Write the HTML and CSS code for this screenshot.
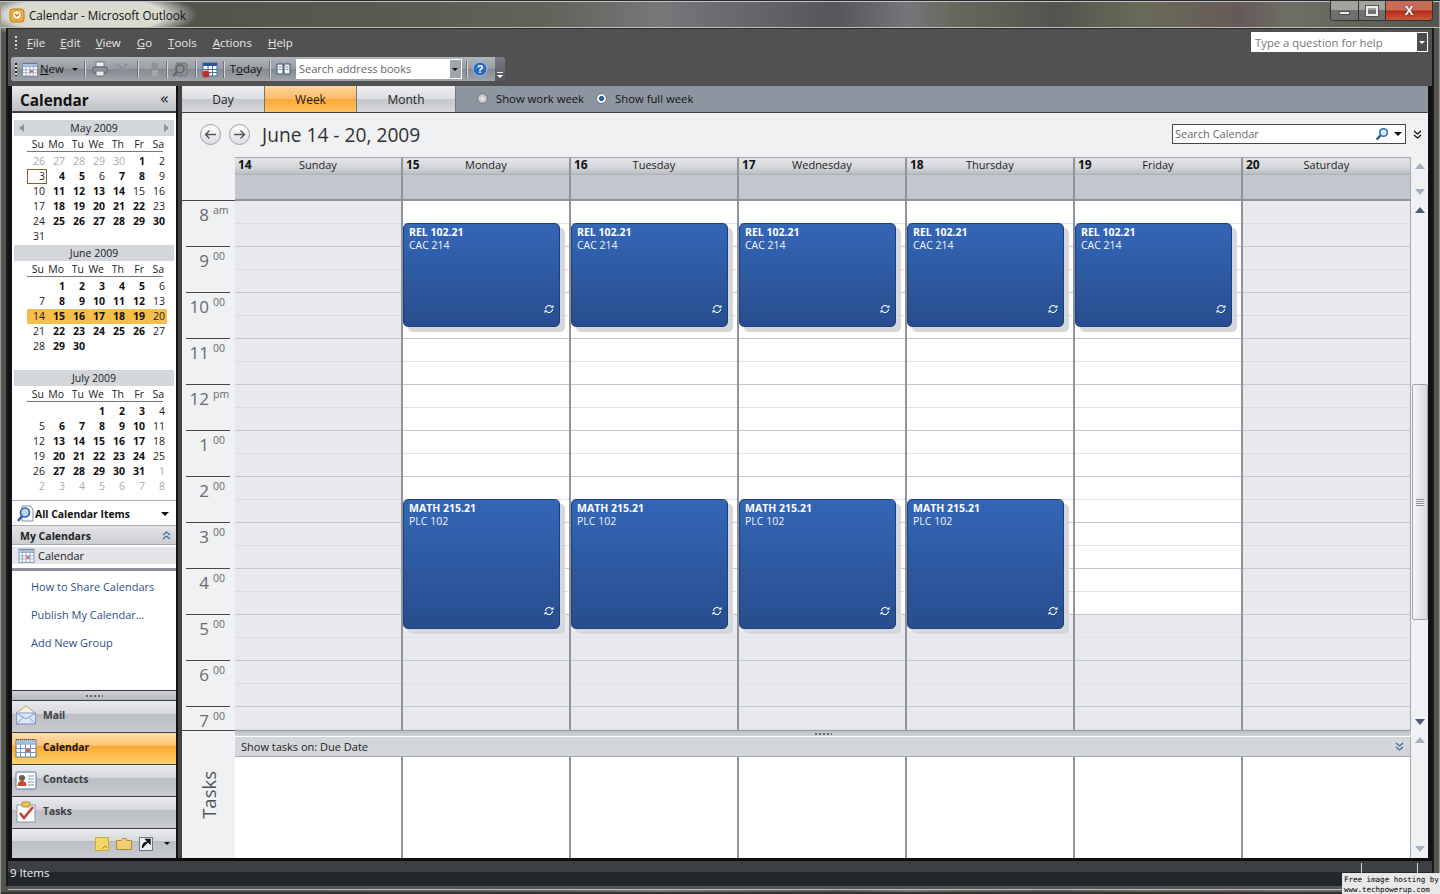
FILE: index.html
```html
<!DOCTYPE html>
<html lang="en">
<head>
<meta charset="utf-8">
<title>Calendar - Microsoft Outlook</title>
<link rel="stylesheet" href="styles.css">
</head>
<body>
<svg class="defs" width="0" height="0" aria-hidden="true">
  <symbol id="cal" viewBox="0 0 22 20">
    <rect x="1" y="2" width="20" height="17" fill="#fff" stroke="#5b78a8"/>
    <path d="M1 1.500h20" stroke="#444" stroke-dasharray="1 1"/>
    <rect x="1.500" y="2.500" width="19" height="3" fill="#a9bcd9"/>
    <path d="M1 6h20M1 10.500h20M1 14.500h20M5.500 6v13M10.500 6v13M15.500 6v13" stroke="#7d95bd" fill="none"/>
    <rect x="11" y="11" width="4" height="3" fill="#d8604a"/>
  </symbol>
  <symbol id="recur" viewBox="0 0 10 10">
    <path d="M1.500 5a3.500 3.500 0 0 1 6-2.400M8.500 5a3.500 3.500 0 0 1-6 2.400" fill="none" stroke="#fff" stroke-width="1.100"/>
    <path d="M9.500 .8v3H6.500zM.5 9.200v-3h3z" fill="#fff"/>
  </symbol>
  <symbol id="dbl" viewBox="0 0 9 9">
    <path d="M1 1l3.500 3L8 1M1 5l3.500 3L8 5" fill="none" stroke="currentColor" stroke-width="1.300"/>
  </symbol>
</svg>
<div class="window">
  <header class="titlebar">
    <svg class="app-icon" width="16" height="16" viewBox="0 0 16 16"><rect x="1" y="2" width="14" height="13" rx="3" fill="#f3b13c" stroke="#b9791b"/><circle cx="8" cy="8" r="4.500" fill="#fff6d8" stroke="#c98a22"/><path d="M6 7l2 2 2-2" fill="none" stroke="#b9791b" stroke-width="1.300"/></svg>
    <span class="app-title">Calendar - Microsoft Outlook</span>
    <div class="captions">
      <span class="cap cap-min"><i></i></span>
      <span class="cap cap-max"><i></i></span>
      <span class="cap cap-close">X</span>
    </div>
  </header>

  <div class="frame">
    <nav class="menubar">
      <span class="grip"></span>
      <span class="menu m1"><u>F</u>ile</span>
      <span class="menu m2"><u>E</u>dit</span>
      <span class="menu m3"><u>V</u>iew</span>
      <span class="menu m4"><u>G</u>o</span>
      <span class="menu m5"><u>T</u>ools</span>
      <span class="menu m6"><u>A</u>ctions</span>
      <span class="menu m7"><u>H</u>elp</span>
      <div class="helpbox"><span>Type a question for help</span><em></em></div>
    </nav>

    <div class="toolrow">
      <div class="toolbar">
        <span class="grip g2"></span>
        <svg class="ti t-new" width="16" height="15"><use href="#cal"/></svg>
        <span class="tool-text t-newtext"><u>N</u>ew</span>
        <span class="caret t-caret"></span>
        <span class="sep"></span>
        <svg class="ti" width="16" height="16" viewBox="0 0 16 16"><rect x="4" y="1" width="8" height="5" fill="#f0f0f0" stroke="#777"/><rect x="1" y="6" width="14" height="6" rx="1" fill="#8a94a3" stroke="#555d68"/><rect x="4" y="10" width="8" height="5" fill="#e8e8e8" stroke="#777"/></svg>
        <svg class="ti t-x" width="14" height="14" viewBox="0 0 14 14"><path d="M1.500 1.500l11 11M12.500 1.500l-11 11" stroke="#8c9198" stroke-width="2"/></svg>
        <span class="sep s2"></span>
        <svg class="ti" width="16" height="15" viewBox="0 0 16 15"><rect x="1" y="1" width="6" height="6" fill="#a4a8ad"/><rect x="9" y="1" width="6" height="6" fill="#8f9398"/><rect x="1" y="8" width="6" height="6" fill="#8f9398"/><rect x="9" y="8" width="6" height="6" fill="#a4a8ad"/></svg>
        <span class="sep s3"></span>
        <svg class="ti" width="17" height="17" viewBox="0 0 17 17"><rect x="4" y="2" width="11" height="13" rx="2" fill="#8c9096" stroke="#6d7177"/><circle cx="8" cy="8" r="4" fill="none" stroke="#5f6369" stroke-width="1.500"/><path d="M1 15l4-4" stroke="#5f6369" stroke-width="2"/></svg>
        <span class="sep s6"></span>
        <svg class="ti" width="17" height="17" viewBox="0 0 17 17"><rect x="2" y="2" width="14" height="13" fill="#fff" stroke="#4d6a9c"/><rect x="2" y="2" width="14" height="3" fill="#2f5597"/><path d="M2 8.500h14M2 11.500h14M7 5v10M11.500 5v10" stroke="#4d6a9c"/><circle cx="5" cy="13" r="3.500" fill="#c0322a"/></svg>
        <span class="sep s7"></span>
        <span class="tool-text t-today">T<u>o</u>day</span>
        <span class="sep s4"></span>
        <svg class="ti" width="15" height="14" viewBox="0 0 15 14"><path d="M1 2h6v10H1zM8 2h6v10H8z" fill="#f6f6f0" stroke="#37557f"/><path d="M2.500 5h3M2.500 7.500h3M9.500 5h3M9.500 7.500h3" stroke="#7d93b4"/></svg>
        <div class="addrbox"><span>Search address books</span><em></em></div>
        <span class="sep s5"></span>
        <svg class="ti" width="16" height="16" viewBox="0 0 16 16"><circle cx="8" cy="8" r="7" fill="#2d68c4" stroke="#a9c4ea"/><text class="help-q" x="8" y="12" text-anchor="middle">?</text></svg>
      </div>
      <div class="overflow"><i></i></div>
    </div>

    <div class="workspace">
      <aside class="sidebar">
        <div class="side-head"><strong>Calendar</strong><span>«</span></div>
        <div class="minis">
          <section class="mini">
            <div class="mini-head nav"><span class="tri-l"></span><span>May 2009</span><span class="tri-r"></span></div>
            <div class="dow"><span>Su</span><span>Mo</span><span>Tu</span><span>We</span><span>Th</span><span>Fr</span><span>Sa</span></div>
            <div class="dates">
              <i>26</i><i>27</i><i>28</i><i>29</i><i>30</i><b>1</b><span>2</span>
              <span class="today">3</span><b>4</b><b>5</b><span>6</span><b>7</b><b>8</b><span>9</span>
              <span>10</span><b>11</b><b>12</b><b>13</b><b>14</b><span>15</span><span>16</span>
              <span>17</span><b>18</b><b>19</b><b>20</b><b>21</b><b>22</b><span>23</span>
              <span>24</span><b>25</b><b>26</b><b>27</b><b>28</b><b>29</b><b>30</b>
              <span>31</span>
            </div>
          </section>
          <section class="mini">
            <div class="mini-head"><span>June 2009</span></div>
            <div class="dow"><span>Su</span><span>Mo</span><span>Tu</span><span>We</span><span>Th</span><span>Fr</span><span>Sa</span></div>
            <div class="dates">
              <span></span><b>1</b><b>2</b><b>3</b><b>4</b><b>5</b><span>6</span>
              <span>7</span><b>8</b><b>9</b><b>10</b><b>11</b><b>12</b><span>13</span>
              <span class="sel">14</span><b class="sel">15</b><b class="sel">16</b><b class="sel">17</b><b class="sel">18</b><b class="sel">19</b><span class="sel">20</span>
              <span>21</span><b>22</b><b>23</b><b>24</b><b>25</b><b>26</b><span>27</span>
              <span>28</span><b>29</b><b>30</b>
            </div>
          </section>
          <section class="mini">
            <div class="mini-head"><span>July 2009</span></div>
            <div class="dow"><span>Su</span><span>Mo</span><span>Tu</span><span>We</span><span>Th</span><span>Fr</span><span>Sa</span></div>
            <div class="dates">
              <span></span><span></span><span></span><b>1</b><b>2</b><b>3</b><span>4</span>
              <span>5</span><b>6</b><b>7</b><b>8</b><b>9</b><b>10</b><span>11</span>
              <span>12</span><b>13</b><b>14</b><b>15</b><b>16</b><b>17</b><span>18</span>
              <span>19</span><b>20</b><b>21</b><b>22</b><b>23</b><b>24</b><span>25</span>
              <span>26</span><b>27</b><b>28</b><b>29</b><b>30</b><b>31</b><i>1</i>
              <i>2</i><i>3</i><i>4</i><i>5</i><i>6</i><i>7</i><i>8</i>
            </div>
          </section>
        </div>
        <div class="all-items">
          <svg width="17" height="18" viewBox="0 0 17 18"><path d="M5 1h8l3 3v12H5z" fill="#fff" stroke="#7a8ba5"/><circle cx="8" cy="7.500" r="4.500" fill="#bcd6f2" stroke="#2d5f9f" stroke-width="1.600"/><path d="M5 11l-4 5" stroke="#2d5f9f" stroke-width="2.400"/></svg>
          <b>All Calendar Items</b><span class="caret big"></span>
        </div>
        <div class="group-head"><b>My Calendars</b><svg class="up-dbl" width="9" height="9"><use href="#dbl"/></svg></div>
        <div class="group-item"><svg width="17" height="15"><use href="#cal"/></svg><span>Calendar</span></div>
        <div class="links">
          <a>How to Share Calendars</a>
          <a>Publish My Calendar...</a>
          <a>Add New Group</a>
        </div>
        <div class="side-split"><i></i></div>
        <div class="nav-btn">
          <svg class="nv-mail" width="22" height="21" viewBox="0 0 22 21"><path d="M1.500 8L11 1l9.500 7v11h-19z" fill="#f7f0dc" stroke="#b7a888"/><rect x="1.500" y="8" width="19" height="11" fill="#dce8f8" stroke="#7d9ac8"/><path d="M1.500 8l9.500 6 9.500-6M1.500 19l7-7M20.500 19l-7-7" fill="none" stroke="#7d9ac8"/></svg>
          <b>Mail</b>
        </div>
        <div class="nav-btn active">
          <svg width="22" height="20"><use href="#cal"/></svg>
          <b>Calendar</b>
        </div>
        <div class="nav-btn">
          <svg width="22" height="20" viewBox="0 0 22 20"><rect x="1" y="2" width="20" height="17" rx="1" fill="#fff" stroke="#5b78a8"/><circle cx="7" cy="8" r="3" fill="#6a5a50"/><path d="M2.500 16c0-4 2-5 4.500-5s4.500 1 4.500 5z" fill="#c4502c"/><path d="M13 6h6M13 9h6M13 12h6M13 15h6" stroke="#7d95bd"/></svg>
          <b>Contacts</b>
        </div>
        <div class="nav-btn">
          <svg width="22" height="22" viewBox="0 0 22 22"><rect x="2" y="4" width="18" height="17" fill="#fff" stroke="#8a97ab"/><rect x="7" y="1" width="8" height="5" rx="1" fill="#e6c35c" stroke="#b89332"/><path d="M5 12l4 5L18 6" fill="none" stroke="#c93c30" stroke-width="2.600"/></svg>
          <b>Tasks</b>
        </div>
        <div class="nav-foot">
          <svg width="14" height="14" viewBox="0 0 14 14"><rect x=".5" y=".5" width="13" height="13" fill="#f2d765" stroke="#c8a93a"/><path d="M7 12l3-3 2 2" fill="none" stroke="#a58524"/></svg>
          <svg width="16" height="12" viewBox="0 0 16 12"><path d="M.5 2.500h5l1.500-2h3l1 2h4.500v9H.5z" fill="#f0cf72" stroke="#a98a3a"/></svg>
          <svg width="14" height="14" viewBox="0 0 14 14"><rect x=".5" y=".5" width="13" height="13" fill="#e9eef6" stroke="#6d7787"/><path d="M3.500 11c0-4 2-6 6-6M7 2.500h4v4z" fill="#111" stroke="#111" stroke-width="1.400"/></svg>
          <span class="caret small"></span>
        </div>
      </aside>

      <main class="cal">
        <div class="tabs">
          <span class="tab t-day">Day</span>
          <span class="tab t-week">Week</span>
          <span class="tab t-month">Month</span>
          <label class="radio r1"><i></i>Show work week</label>
          <label class="radio r2"><i class="on"></i>Show full week</label>
        </div>
        <div class="cal-head">
          <span class="circle-btn">
            <svg width="13" height="11" viewBox="0 0 13 11"><path d="M12 5.500H2M5.500 1.500l-4 4 4 4" fill="none" stroke="#555" stroke-width="1.400"/></svg>
          </span>
          <span class="circle-btn">
            <svg width="13" height="11" viewBox="0 0 13 11"><path d="M1 5.500h10M7.500 1.500l4 4-4 4" fill="none" stroke="#555" stroke-width="1.400"/></svg>
          </span>
          <h1>June 14 - 20, 2009</h1>
          <div class="searchbox">
            <span>Search Calendar</span>
            <svg width="14" height="14" viewBox="0 0 14 14"><circle cx="8.500" cy="5.500" r="3.800" fill="#dcebf9" stroke="#2a6fb0" stroke-width="1.600"/><path d="M5.500 8.500L1.500 12.500" stroke="#1f4f84" stroke-width="2.200"/></svg>
            <span class="caret"></span>
          </div>
          <svg class="expand" width="9" height="9"><use href="#dbl"/></svg>
        </div>

        <div class="week">
          <div class="ruler-col">
            <div class="ruler-top"></div>
            <div class="ruler">
              <div class="hour first"><span>8</span><sup>am</sup></div>
              <div class="hour"><span>9</span><sup>00</sup></div>
              <div class="hour"><span>10</span><sup>00</sup></div>
              <div class="hour"><span>11</span><sup>00</sup></div>
              <div class="hour"><span>12</span><sup>pm</sup></div>
              <div class="hour"><span>1</span><sup>00</sup></div>
              <div class="hour"><span>2</span><sup>00</sup></div>
              <div class="hour"><span>3</span><sup>00</sup></div>
              <div class="hour"><span>4</span><sup>00</sup></div>
              <div class="hour"><span>5</span><sup>00</sup></div>
              <div class="hour"><span>6</span><sup>00</sup></div>
              <div class="hour last"><span>7</span><sup>00</sup></div>
            </div>
            <div class="tasks-label"><span>Tasks</span></div>
          </div>

          <div class="days-wrap">
            <div class="day-heads">
              <div class="dh"><div class="dh-top"><b>14</b><span>Sunday</span></div><div class="dh-all"></div></div>
              <div class="dh"><div class="dh-top"><b>15</b><span>Monday</span></div><div class="dh-all"></div></div>
              <div class="dh"><div class="dh-top"><b>16</b><span>Tuesday</span></div><div class="dh-all"></div></div>
              <div class="dh"><div class="dh-top"><b>17</b><span>Wednesday</span></div><div class="dh-all"></div></div>
              <div class="dh"><div class="dh-top"><b>18</b><span>Thursday</span></div><div class="dh-all"></div></div>
              <div class="dh"><div class="dh-top"><b>19</b><span>Friday</span></div><div class="dh-all"></div></div>
              <div class="dh"><div class="dh-top"><b>20</b><span>Saturday</span></div><div class="dh-all"></div></div>
            </div>
            <div class="days">
              <div class="day off"></div>
              <div class="day">
                <article class="ev ev-rel"><b>REL 102.21</b><span>CAC 214</span><svg width="10" height="10"><use href="#recur"/></svg></article>
                <article class="ev ev-math"><b>MATH 215.21</b><span>PLC 102</span><svg width="10" height="10"><use href="#recur"/></svg></article>
              </div>
              <div class="day">
                <article class="ev ev-rel"><b>REL 102.21</b><span>CAC 214</span><svg width="10" height="10"><use href="#recur"/></svg></article>
                <article class="ev ev-math"><b>MATH 215.21</b><span>PLC 102</span><svg width="10" height="10"><use href="#recur"/></svg></article>
              </div>
              <div class="day">
                <article class="ev ev-rel"><b>REL 102.21</b><span>CAC 214</span><svg width="10" height="10"><use href="#recur"/></svg></article>
                <article class="ev ev-math"><b>MATH 215.21</b><span>PLC 102</span><svg width="10" height="10"><use href="#recur"/></svg></article>
              </div>
              <div class="day">
                <article class="ev ev-rel"><b>REL 102.21</b><span>CAC 214</span><svg width="10" height="10"><use href="#recur"/></svg></article>
                <article class="ev ev-math"><b>MATH 215.21</b><span>PLC 102</span><svg width="10" height="10"><use href="#recur"/></svg></article>
              </div>
              <div class="day">
                <article class="ev ev-rel"><b>REL 102.21</b><span>CAC 214</span><svg width="10" height="10"><use href="#recur"/></svg></article>
              </div>
              <div class="day off"></div>
            </div>
            <div class="task-split"><i></i></div>
            <div class="task-head"><span>Show tasks on: Due Date</span><svg width="9" height="9"><use href="#dbl"/></svg></div>
            <div class="task-cols"><div></div><div></div><div></div><div></div><div></div><div></div><div></div></div>
          </div>

          <div class="scroll">
            <div class="sc-all"><span class="ar up pale"></span><span class="ar down pale"></span></div>
            <div class="sc-main">
              <span class="ar up dark"></span>
              <div class="sc-track"><div class="thumb"><i></i></div></div>
              <span class="ar down dark"></span>
            </div>
            <div class="sc-task"><span class="ar up pale"></span><span class="ar down pale"></span></div>
          </div>
        </div>
      </main>
    </div>

    <footer class="status">
      <span>9 Items</span>
      <i class="s-a"></i><i class="s-b"></i>
    </footer>
  </div>
  <div class="watermark">Free image hosting by<br>www.techpowerup.com</div>
</div>
</body>
</html>
```

FILE: styles.css
```css
* { box-sizing: border-box; }
html, body { margin: 0; height: 100%; }
body { font-family: "Open Sans", "Noto Sans", sans-serif; font-size: 11px; color: #222; overflow: hidden; }
.defs { position: absolute; }
.window {
  position: relative; height: 894px; width: 1440px; padding-bottom: 8px;
  display: flex; flex-direction: column;
  background:
    radial-gradient(ellipse 112px 26px at 85px 14px, rgba(225,225,215,.95) 70%, rgba(225,225,215,0) 100%),
    linear-gradient(90deg, #53554d 190px, #585b52 400px, #62655c 560px, #77777a 660px, #6a6c70 720px, #55565a 835px, #757679 909px, #67685c 953px, #54544f 1055px, #6a6a58 1143px, #665a58 1239px, #6f6f66 1290px, #55554e 1440px);
  border-top: 1px solid #2a2a2a;
  box-shadow: inset 1px 0 0 #9a9a9a, inset -1px 0 0 #9a9a9a, inset 0 -2px 0 #333;
}
.titlebar { height: 27px; flex: none; display: flex; align-items: center; padding-left: 9px; position: relative; border-top: 1px solid #c4c4c4; border-bottom: 1px solid #bdbdbd; }
.app-icon { flex: none; }
.app-title { margin-left: 4px; font-size: 11.700px; color: #111; }
.captions { margin-left: auto; margin-right: 7px; margin-top: -7px; display: flex; height: 20px; border: 1px solid #333; border-top: 0; border-radius: 0 0 4px 4px; overflow: hidden; }
.cap { display: flex; align-items: center; justify-content: center; background: linear-gradient(#a3a49d 50%, #6e716d 50%); border-right: 1px solid #333; color: #fff; }
.cap-min { width: 28px; }
.cap-min i { width: 11px; height: 4px; background: #eee; border: 1px solid #555; margin-top: 5px; }
.cap-max { width: 27px; }
.cap-max i { width: 12px; height: 10px; border: 2px solid #eee; outline: 1px solid #555; }
.cap-close { width: 46px; border-right: 0; background: linear-gradient(#c96a55 45%, #b42d1a 55%, #cb5a3a); font: bold 13px "Liberation Sans", sans-serif; text-shadow: 0 0 2px #333; }

.frame { flex: 1; margin: 0 8px; display: flex; flex-direction: column; background: #515151; position: relative; border-top: 1px solid #2b2b2b; min-height: 0; box-shadow: -2px 0 0 #1a1a1a, 2px 0 0 #1a1a1a, 0 3px 0 #555, 0 4px 0 #bdbdbd; }

.menubar { height: 28px; flex: none; display: flex; align-items: center; color: #e8e8e8; font-size: 11.500px; position: relative; padding-bottom: 2px; }
.grip { width: 2px; height: 13px; margin-left: 7px; background: repeating-linear-gradient(#ddd 0 2px, transparent 2px 4px); }
.menu { flex: none; }
.m1 { margin-left: 10px; }
.m2 { margin-left: 15px; }
.m3 { margin-left: 15px; }
.m4 { margin-left: 16px; }
.m5 { margin-left: 16px; }
.m6 { margin-left: 16px; }
.m7 { margin-left: 16px; }
.helpbox { margin-left: auto; margin-right: 4px; width: 177px; height: 20px; background: #fff; color: #777; display: flex; align-items: center; padding-left: 4px; font-size: 11.300px; }
.helpbox em { margin-left: auto; width: 11px; height: 100%; background: #4d4d4d; border: 1px solid #fff; border-left: 0; position: relative; }
.helpbox em::after { content: ""; position: absolute; left: 2px; top: 8px; border: 3px solid transparent; border-top-color: #fff; }

.toolrow { height: 29px; flex: none; display: flex; padding-left: 3px; padding-bottom: 5px; }
.toolbar { width: 484px; display: flex; align-items: center; background: linear-gradient(#b0b5bc, #989da4 48%, #868b92 52%, #a0a5ac); border-radius: 3px 0 0 3px; color: #111; }
.g2 { margin-left: 4px; background: repeating-linear-gradient(#222 0 2px, #ddd 2px 4px); }
.ti { flex: none; }
.t-new { margin-left: 5px; }
.tool-text { font-size: 11.400px; flex: none; padding-bottom: 2px; }
.t-newtext { margin-left: 2px; }
.caret { width: 0; height: 0; border: 3px solid transparent; border-top: 3px solid #111; border-bottom: 0; flex: none; }
.t-caret { margin-left: 8px; }
.sep { width: 1px; height: 17px; margin: 0 7px 0 6px; background: #6d7177; box-shadow: 1px 0 0 #d4d6da; flex: none; }
.t-x { margin-left: 7px; }
.s2 { margin: 0 5px 0 8px; }
.s3 { margin: 0 5px 0 7px; }
.s6 { margin: 0 5px 0 6px; }
.s7 { margin: 0 6px 0 5px; }
.s4 { margin: 0 6px 0 7px; }
.addrbox { margin-left: 5px; width: 166px; height: 20px; background: #fff; color: #666; display: flex; align-items: center; padding: 0 0 2px 3px; font-size: 11px; flex: none; }
.addrbox em { margin: 0 0 -2px auto; width: 13px; height: 20px; background: #a1a5ab; border: 1px solid #fff; position: relative; }
.addrbox em::after { content: ""; position: absolute; left: 2px; top: 8px; border: 3px solid transparent; border-top-color: #111; }
.s5 { margin: 0 5px 0 4px; }
.help-q { font: bold 11px "Liberation Sans", sans-serif; fill: #fff; }
.overflow { width: 10px; background: linear-gradient(#7a7e84, #52555a); border-radius: 0 3px 3px 0; position: relative; }
.overflow i { position: absolute; left: 2px; bottom: 3px; width: 6px; height: 6px; border-top: 1px solid #fff; }
.overflow i::after { content: ""; position: absolute; left: 0; top: 2px; border: 3px solid transparent; border-top-color: #fff; }

.workspace { height: 772px; flex: none; display: flex; padding: 0 4px; background: linear-gradient(90deg, #111 4px, #444 4px, #444 calc(100% - 4px), #111 calc(100% - 4px)); }
.sidebar { width: 164px; flex: none; display: flex; flex-direction: column; background: #fff; box-shadow: 2px 0 0 #111; }
.side-head { height: 27px; flex: none; display: flex; align-items: center; justify-content: space-between; padding: 2px 7px 0 8px; background: linear-gradient(#e7e8ea, #d3d5d8 50%, #bdc0c4); border-bottom: 2px solid #3f4245; }
.side-head strong { font-size: 15.300px; color: #111; }
.side-head span { font: 15px "DejaVu Sans", sans-serif; color: #222; margin-top: -2px; }
.minis { flex: none; height: 387px; padding: 7px 2px 0; }
.mini { height: 125px; }
.mini-head { height: 16px; background: #d3d6db; display: flex; align-items: center; justify-content: center; font-size: 10.500px; color: #222; padding: 0 5px; padding-bottom: 1px; }
.mini-head.nav { justify-content: space-between; }
.tri-l, .tri-r { width: 0; height: 0; border: 4.500px solid transparent; }
.tri-l { border-right: 5px solid #8c929a; border-left: 0; }
.tri-r { border-left: 5px solid #8c929a; border-right: 0; }
.dow, .dates { display: grid; grid-template-columns: repeat(7, 20px); margin: 0 11px 0 13px; }
.dow { height: 16px; border-bottom: 1px solid #777; align-items: center; font-size: 10.500px; color: #222; }
.dow span { text-align: right; padding-right: 3px; }
.dates > * { text-align: right; padding-right: 2px; }
.dates { margin-top: 2px; grid-auto-rows: 15px; font-size: 10.500px; line-height: 15px; color: #222; }
.dates b { font-weight: 700; color: #111; }
.dates i { font-style: normal; color: #a9a9a9; }
.dates .sel { background: #f7bd4d; }
.dates .today { border: 1px solid #8a5c21; line-height: 13px; padding-right: 1px; }

.all-items { height: 26px; flex: none; display: flex; align-items: center; gap: 1px; padding: 1px 7px 0 5px; border-top: 1px solid #a9acb1; border-bottom: 1px solid #a9acb1; font-size: 10.400px; }
.all-items b { color: #111; }
.caret.big { margin-left: auto; border-width: 4px; border-bottom: 0; border-top-color: #111; }
.group-head { height: 19px; flex: none; display: flex; align-items: center; justify-content: space-between; padding: 1px 5px 0 8px; font-size: 10.500px; background: linear-gradient(#e3e4e7, #ccced2); border-bottom: 1px solid #a9acb1; }
.up-dbl { color: #3b6ca6; transform: scaleY(-1); }
.group-item { margin-top: 2px; height: 17px; flex: none; display: flex; align-items: center; gap: 3px; padding-left: 6px; background: #e3e4e7; font-size: 11px; }
.links { flex: 1; border-top: 3px solid #8e9197; margin-top: 4px; display: flex; flex-direction: column; padding: 8px 0 0 19px; gap: 0; }
.links a { height: 28px; line-height: 16px; color: #2e4f90; font-size: 11px; }
.side-split { height: 10px; flex: none; background: linear-gradient(#d2d4d8, #b2b5ba); border-top: 1px solid #333; display: flex; justify-content: center; align-items: center; }
.side-split i { width: 17px; height: 2px; background: repeating-linear-gradient(90deg, #666 0 2px, transparent 2px 4px); }
.nav-btn { height: 32px; flex: none; display: flex; align-items: center; gap: 6px; padding-left: 3px; border-top: 1px solid #3f4245; background: linear-gradient(#e9eaec, #d9dade 40%, #bbbec3 42%, #c9cbd0); color: #3c4047; font-size: 10.300px; }
.nav-btn b { margin-top: -4px; }
.nav-btn svg { margin-top: -2px; }
.nav-btn.active { background: linear-gradient(#fde0ac, #fcc476 40%, #fba531 42%, #fed56b); color: #111; }
.nav-foot { height: 30px; flex: none; display: flex; align-items: center; justify-content: flex-end; gap: 7px; padding-right: 6px; border-top: 1px solid #3f4245; background: linear-gradient(#e9eaec, #d9dade 40%, #bbbec3 42%, #c9cbd0); }
.caret.small { margin-left: 4px; }

.cal { flex: 1; margin-left: 6px; min-width: 0; display: flex; flex-direction: column; background: #f0f1f3; }
.tabs { height: 27px; flex: none; display: flex; align-items: center; background: #8d96a0; border-bottom: 1px solid #3f4245; font-size: 12px; }
.tab { height: 100%; display: flex; align-items: center; justify-content: center; color: #222; background: linear-gradient(#eceef0, #dcdee1 48%, #c3c6cb 52%, #d7d9dc); border-right: 1px solid #777; }
.t-day { width: 83px; }
.t-week { width: 92px; background: linear-gradient(#fdd69c, #fcbc6a 48%, #fba83c 52%, #fec45f); color: #222; }
.t-month { width: 99px; }
.radio { display: flex; align-items: center; color: #111; font-size: 11.300px; margin-top: -2px; }
.radio i { width: 11px; height: 11px; border-radius: 50%; margin-right: 8px; background: radial-gradient(#e8e8e8, #a8a8a8); border: 1px solid #777; }
.radio i.on { background: radial-gradient(#24609c 35%, #f2f2f2 40%); }
.r1 { margin-left: 21px; }
.r2 { margin-left: 12px; }
.cal-head { height: 44px; flex: none; display: flex; align-items: center; padding: 0 6px 2px 18px; }
.circle-btn { width: 21px; height: 21px; border-radius: 50%; border: 1px solid #9a9ea3; background: linear-gradient(#fdfdfd, #dcdee2); display: flex; align-items: center; justify-content: center; margin-right: 8px; flex: none; }
.cal-head h1 { margin: 0 0 0 4px; font-size: 19.200px; font-weight: 400; color: #333; }
.searchbox { margin-left: auto; width: 234px; height: 20px; background: #fff; border: 1px solid #45484d; display: flex; align-items: center; gap: 5px; padding: 0 3px 1px 2px; color: #666; font-size: 11px; }
.searchbox span:first-child { margin-right: auto; }
.searchbox .caret { border-width: 4px; border-bottom: 0; border-top-color: #111; }
.expand { margin-left: 7px; color: #111; }

.week { flex: 1; display: flex; min-height: 0; }
.ruler-col { width: 53px; flex: none; display: flex; flex-direction: column; }
.ruler-top { height: 44px; flex: none; border-bottom: 1px solid #45484d; }
.ruler { height: 529px; flex: none; }
.hour { height: 46px; margin-left: 4px; margin-right: 5px; border-top: 1px solid #45484d; display: flex; justify-content: flex-end; padding-right: 4px; color: #666a70; line-height: 1; }
.hour.first { border-top: 0; height: 45px; }
.hour.last { height: 24px; }
.hour span { font-size: 17px; margin-top: 5px; }
.hour sup { font-size: 10.500px; margin: 4px 0 0 4px; width: 13px; vertical-align: baseline; line-height: 1; }
.tasks-label { flex: 1; border-top: 1px solid #45484d; display: flex; align-items: center; justify-content: center; position: relative; z-index: 1; background: #f0f1f3; }
.tasks-label span { writing-mode: vertical-rl; transform: rotate(180deg); font-size: 18.500px; color: #4e5359; }

.days-wrap { width: 1176px; flex: none; display: flex; flex-direction: column; }
.day-heads { height: 44px; flex: none; display: grid; grid-template-columns: repeat(7, 168px); border-top: 1px solid #a7abb1; border-bottom: 2px solid #8f949b; }
.dh { display: flex; flex-direction: column; border-right: 2px solid #8f949b; }
.dh:last-child { border-right: 1px solid #a7abb1; }
.dh-top { height: 17px; display: flex; align-items: center; background: linear-gradient(#e3e4e7, #d6d8db 55%, #b9bcc2); padding: 0 0 3px 3px; border-bottom: 1px solid #aeb1b6; }
.dh-top b { font-size: 12px; color: #111; }
.dh-top span { flex: 1; text-align: center; margin-right: 17px; color: #222; }
.dh-all { flex: 1; background: #c4c7ce; }
.days { height: 529px; flex: none; display: grid; grid-template-columns: repeat(7, 168px); }
.day {
  position: relative; border-right: 2px solid #8f949b;
  background:
    repeating-linear-gradient(transparent 0 45px, #c4c7cc 45px 46px),
    repeating-linear-gradient(transparent 0 22px, #dfe1e4 22px 23px, transparent 23px 46px),
    linear-gradient(#fff 413px, #e7e9ec 413px);
}
.day:last-child { border-right: 1px solid #a7abb1; }
.day.off { background:
    repeating-linear-gradient(transparent 0 45px, #c4c7cc 45px 46px),
    repeating-linear-gradient(transparent 0 22px, #d9dbdf 22px 23px, transparent 23px 46px),
    #e7e9ec; }
.ev { position: absolute; left: 0; width: 157px; padding: 2px 5px; display: flex; flex-direction: column; border: 1px solid #213f77; border-radius: 5px; background: linear-gradient(#3466b6, #274d8e); color: #f3f6fb; box-shadow: 5px 5px 0 #d5d7db; font-size: 10.500px; line-height: 13px; }
.ev b { font-weight: 700; color: #fff; }
.ev svg { position: absolute; right: 5px; bottom: 12px; }
.ev-rel { top: 22px; height: 104px; }
.ev-math { top: 298px; height: 130px; }

.task-split { height: 7px; flex: none; border-top: 1px solid #9b9fa5; background: linear-gradient(#bcc0c5, #d0d3d7); border-bottom: 1px solid #fff; display: flex; justify-content: center; align-items: center; }
.task-split i { width: 17px; height: 2px; background: repeating-linear-gradient(90deg, #666 0 2px, transparent 2px 4px); }
.task-head { height: 20px; flex: none; display: flex; align-items: center; justify-content: space-between; padding: 0 6px; background: #d3d6da; border-bottom: 1px solid #a7abb1; border-right: 1px solid #a7abb1; color: #222; font-size: 11px; }
.task-head svg { color: #3b6ca6; }
.task-cols { flex: 1; display: grid; grid-template-columns: repeat(7, 168px); background: #fff; }
.task-cols div { border-right: 2px solid #8f949b; }
.task-cols div:last-child { border-right: 1px solid #a7abb1; }

.scroll { flex: 1; display: flex; flex-direction: column; align-items: center; background: #f0f1f3; }
.sc-all { height: 44px; flex: none; width: 100%; display: flex; flex-direction: column; align-items: center; justify-content: space-between; padding: 6px 0; }
.sc-main { height: 529px; flex: none; width: 100%; display: flex; flex-direction: column; align-items: center; padding: 6px 0 5px; }
.sc-track { flex: 1; width: 100%; padding-top: 171px; }
.thumb { height: 236px; background: linear-gradient(90deg, #f5f6f7, #d7d9dc); border: 1px solid #a3a7ad; border-radius: 2px; margin-left: 1px; display: flex; align-items: center; justify-content: center; }
.thumb i { width: 8px; height: 7px; background: repeating-linear-gradient(#8b8f95 0 1px, #f4f4f4 1px 2px); }
.sc-task { flex: 1; width: 100%; display: flex; flex-direction: column; align-items: center; justify-content: space-between; padding: 7px 0 6px; }
.ar { width: 0; height: 0; border-left: 5px solid transparent; border-right: 5px solid transparent; }
.ar.up.pale { border-bottom: 6px solid #a6b0c2; }
.ar.down.pale { border-top: 6px solid #a6b0c2; }
.ar.up.dark { border-bottom: 6px solid #4c5a78; }
.ar.down.dark { border-top: 6px solid #4c5a78; }

.status { height: 28px; flex: none; border-top: 3px solid #0d0d0d; display: flex; align-items: center; padding: 0 0 2px 2px; color: #f0f0f0; font-size: 11.500px; background: linear-gradient(#3d4043 45%, #23262b 45%); position: relative; }
.s-a, .s-b { width: 1px; height: 10px; background: #d8d8d8; align-self: flex-start; margin-top: 2px; }
.s-a { margin-left: auto; margin-right: 55px; }
.s-b { margin-right: 14px; }
.watermark { position: absolute; right: 0; bottom: 0; width: 98px; height: 21px; padding: 2px 0 0 2px; background: #e8e8e8; color: #000; font: 7.500px/10px "DejaVu Sans Mono", monospace; white-space: nowrap; overflow: hidden; }
```
